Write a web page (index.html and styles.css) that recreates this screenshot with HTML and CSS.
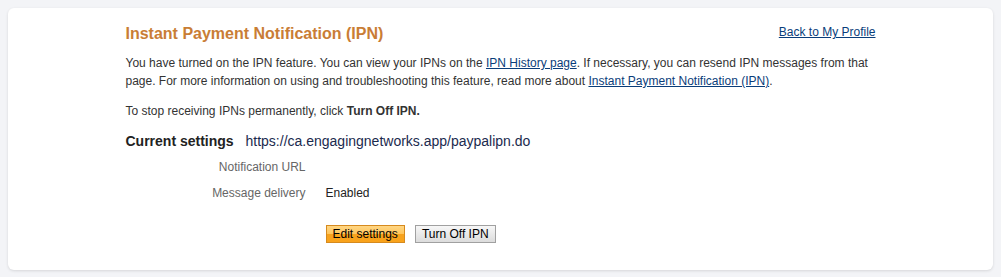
FILE: index.html
```html
<!DOCTYPE html>
<html lang="en">

<head>
    <meta charset="UTF-8">
    <title>Instant Payment Notification (IPN)</title>
    <link rel="stylesheet" href="styles.css">
</head>

<body>
    <div class="card">
        <div class="content">
            <div class="head">
                <h1>Instant Payment Notification (IPN)</h1>
                <a href="#" class="back">Back to My Profile</a>
            </div>
            <p class="intro">You have turned on the IPN feature. You can view your IPNs on the <a href="#">IPN History page</a>. If necessary, you can resend IPN messages from that page. For more information on using and troubleshooting this feature, read more about <a href="#">Instant Payment Notification (IPN)</a>.</p>
            <p class="stop">To stop receiving IPNs permanently, click <b>Turn Off IPN.</b></p>

            <div class="current">
                <h2>Current settings</h2>
                <span class="url">https://ca.engagingnetworks.app/paypalipn.do</span>
            </div>

            <div class="settings">
                <div class="label">Notification URL</div>
                <div class="value"></div>
                <div class="label">Message delivery</div>
                <div class="value">Enabled</div>
            </div>

            <div class="buttons">
                <button class="btn primary">Edit settings</button>
                <button class="btn">Turn Off IPN</button>
            </div>
        </div>
    </div>
</body>

</html>
```

FILE: styles.css
```css
body {
    margin: 0;
    padding: 8px;
    background-color: #f3f4f7;
    font-family: "Liberation Sans", Arial, sans-serif;
    color: #222;
}

.card {
    background-color: #fff;
    border-radius: 6px;
    box-shadow: 0 1px 3px rgba(0, 0, 0, 0.12);
    height: 262px;
    box-sizing: border-box;
    padding-top: 17px;
}

.content {
    width: 750px;
    margin: 0 auto;
}

.head {
    display: flex;
    justify-content: space-between;
    align-items: flex-start;
}

h1 {
    margin: 0;
    font-size: 16px;
    font-weight: bold;
    color: #c97d35;
}

a {
    color: #0a3d7a;
}

.back {
    font-size: 12px;
}

p {
    font-size: 12px;
    line-height: 18px;
    color: #333;
}

.intro {
    margin: 11px 0 0 0;
}

.stop {
    margin: 12px 0 0 0;
}

.current {
    display: flex;
    align-items: baseline;
    margin-top: 13px;
}

h2 {
    margin: 0;
    font-size: 14px;
    font-weight: bold;
    color: #222;
    width: 120px;
}

.url {
    font-size: 14px;
    color: #1b2a4e;
}

.settings {
    display: grid;
    grid-template-columns: 180px auto;
    column-gap: 20px;
    row-gap: 8px;
    margin-top: 9px;
    font-size: 12px;
    line-height: 18px;
}

.label {
    text-align: right;
    color: #666;
}

.value {
    color: #222;
}

.buttons {
    display: flex;
    gap: 10px;
    margin-top: 23px;
    padding-left: 200px;
}

.btn {
    font-family: "Liberation Sans", Arial, sans-serif;
    font-size: 12px;
    height: 18px;
    padding: 0 6px;
    border: 1px solid #a0a0a0;
    border-radius: 0;
    background: linear-gradient(#f7f7f7, #dcdcdc);
    color: #000;
    cursor: pointer;
}

.btn.primary {
    border-color: #d68a1e;
    background: linear-gradient(#ffd684 0%, #ffc55a 50%, #f7a21c 51%, #f9a31b 100%);
}
```
